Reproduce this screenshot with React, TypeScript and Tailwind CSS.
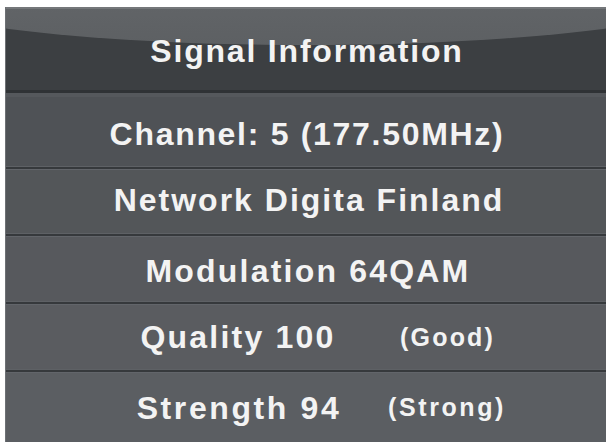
import React from "react";

const font = { fontFamily: '"Liberation Sans", Arial, sans-serif' };

function Divider() {
  return (
    <div className="flex flex-col">
      <div className="h-[1px] bg-[#5e6165]" />
      <div className="h-[2px] bg-[#36393c]" />
      <div className="h-[1px] bg-[#62656a]" />
    </div>
  );
}

export default function App() {
  return (
    <div className="w-[606px] h-[442px] bg-white pt-[7px] pl-[5px] overflow-hidden" style={font}>
      <div className="w-[601px] h-[435px] flex flex-col bg-[#56595d] border-l border-[#6d7074] text-[#f3f3f3] font-bold">
        {/* Header */}
        <div className="relative h-[86px] bg-[#3c3f42] overflow-hidden flex items-center justify-center">
          <div className="absolute left-[-20%] w-[140%] top-[-72px] h-[110px] rounded-[50%] bg-gradient-to-b from-[#686b6e] to-[#5d6063]" />
          <div className="absolute left-0 right-0 top-0 h-[2px] bg-[#74777a]" />
          <div className="absolute left-0 right-0 bottom-0 h-[3px] bg-[#2f3235]" />
          <span className="relative text-[32px] tracking-[1.8px] leading-none mt-[1px] pl-[2px]">Signal Information</span>
        </div>
        <div className="h-[4px] bg-[#55585c]" />
        {/* Channel */}
        <div className="h-[69px] bg-[#4f5256] flex items-center justify-center">
          <span className="text-[32px] tracking-[1.7px] leading-none mt-[5px] pl-[2px]">Channel: 5 (177.50MHz)</span>
        </div>
        <Divider />
        {/* Network */}
        <div className="h-[63px] bg-[#535659] flex items-center justify-center">
          <span className="text-[32px] tracking-[2px] leading-none mt-[-4px] pl-[6px]">Network Digita Finland</span>
        </div>
        <Divider />
        {/* Modulation */}
        <div className="h-[64px] bg-[#57595d] flex items-center justify-center">
          <span className="text-[32px] tracking-[2.2px] leading-none mt-[3px] pl-[4px]">Modulation 64QAM</span>
        </div>
        <Divider />
        {/* Quality */}
        <div className="h-[64px] bg-[#5a5c60] flex items-center">
          <span className="w-[236px] ml-[114px] text-center text-[32px] tracking-[2.2px] leading-none">Quality 100</span>
          <span className="ml-[44px] text-[25px] tracking-[2.2px] leading-none">(Good)</span>
        </div>
        <Divider />
        {/* Strength */}
        <div className="flex-1 bg-[#5b5e62] flex items-center">
          <span className="w-[236px] ml-[115px] text-center text-[32px] tracking-[2.6px] leading-none">Strength 94</span>
          <span className="ml-[31px] text-[25px] tracking-[2.6px] leading-none">(Strong)</span>
        </div>
      </div>
    </div>
  );
}
